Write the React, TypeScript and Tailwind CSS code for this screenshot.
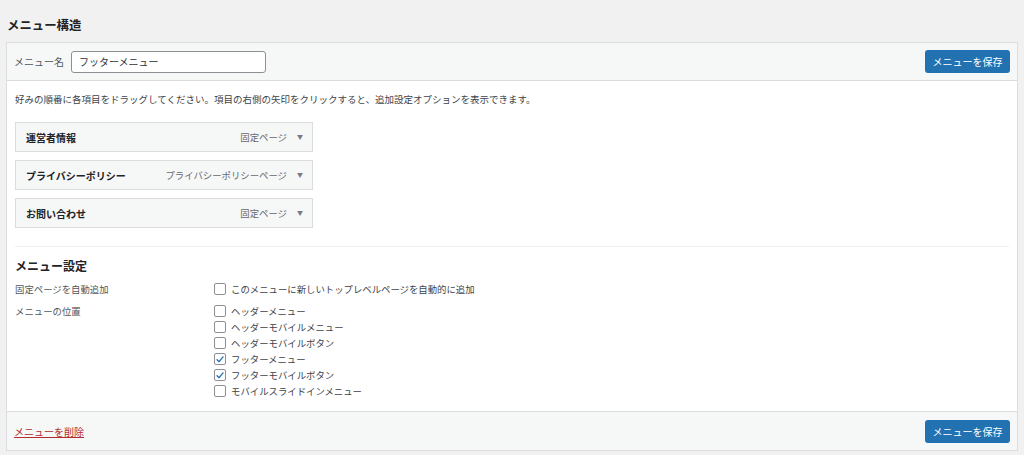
import React from 'react';

const items = [
  { title: '運営者情報', type: '固定ページ' },
  { title: 'プライバシーポリシー', type: 'プライバシーポリシーページ' },
  { title: 'お問い合わせ', type: '固定ページ' },
];

const locations = [
  { label: 'ヘッダーメニュー', checked: false },
  { label: 'ヘッダーモバイルメニュー', checked: false },
  { label: 'ヘッダーモバイルボタン', checked: false },
  { label: 'フッターメニュー', checked: true },
  { label: 'フッターモバイルボタン', checked: true },
  { label: 'モバイルスライドインメニュー', checked: false },
];

const Checkbox: React.FC<{ checked?: boolean }> = ({ checked }) => (
  <span className="w-[12px] h-[12px] border border-[#8c8f94] rounded-[2px] bg-white flex items-center justify-center flex-shrink-0">
    {checked && (
      <svg viewBox="0 0 12 12" className="w-[11px] h-[11px]">
        <path d="M2.5 6.2 L5 8.6 L9.6 2.8" fill="none" stroke="#2271b1" strokeWidth="1.6" strokeLinecap="round" strokeLinejoin="round" />
      </svg>
    )}
  </span>
);

const SaveButton: React.FC = () => (
  <button className="h-[23px] w-[85px] bg-[#2271b1] text-white text-[10px] rounded-[3px] flex items-center justify-center">
    メニューを保存
  </button>
);

export default function App() {
  return (
    <div
      className="w-[1024px] h-[455px] bg-[#f1f1f1] text-[#1d2327] overflow-hidden"
      style={{ fontFamily: '"Noto Sans CJK JP", "Noto Sans", sans-serif' }}
    >
      <h2 className="pl-[7px] pt-[16px] h-[42px] text-[12.4px] font-bold leading-[18px]">メニュー構造</h2>

      <div className="ml-[6px] w-[1012px] border border-[#dcdcde] bg-white">
        {/* Header */}
        <div className="h-[38px] bg-[#f6f7f7] border-b border-[#dcdcde] flex items-center justify-between pl-[7px] pr-[7px]">
          <div className="flex items-center gap-[7px]">
            <span className="text-[10px] text-[#50575e]">メニュー名</span>
            <div className="w-[195px] h-[22px] border border-[#8c8f94] rounded-[3px] bg-white flex items-center px-[7px] text-[10px] text-[#2c3338]">
              フッターメニュー
            </div>
          </div>
          <SaveButton />
        </div>

        {/* Body */}
        <div className="px-[8px] pt-[11px] pb-[13px]">
          <p className="text-[9.5px] text-[#3c434a] leading-[14px]">
            好みの順番に各項目をドラッグしてください。項目の右側の矢印をクリックすると、追加設定オプションを表示できます。
          </p>

          <div className="mt-[16px] flex flex-col gap-[8px]">
            {items.map(item => (
              <div
                key={item.title}
                className="w-[298px] h-[30px] border border-[#dcdcde] bg-[#f6f7f7] flex items-center justify-between pl-[10px] pr-[9px]"
              >
                <span className="text-[10px] font-bold text-[#1d2327]">{item.title}</span>
                <span className="flex items-center gap-[10px]">
                  <span className="text-[9.4px] text-[#646970]">{item.type}</span>
                  <span className="text-[6px] text-[#787c82]">▼</span>
                </span>
              </div>
            ))}
          </div>

          <div className="mt-[18px] border-t border-[#f0f0f1]" />

          <h3 className="mt-[11px] text-[12px] font-bold leading-[16px]">メニュー設定</h3>

          <div className="mt-[8px] flex">
            <div className="w-[199px] text-[9.4px] text-[#50575e] leading-[14px]">固定ページを自動追加</div>
            <label className="flex items-center gap-[5px] text-[9.4px] text-[#3c434a] leading-[14px]">
              <Checkbox />
              このメニューに新しいトップレベルページを自動的に追加
            </label>
          </div>

          <div className="mt-[8px] flex">
            <div className="w-[199px] text-[9.4px] text-[#50575e] leading-[14px]">メニューの位置</div>
            <div className="flex flex-col gap-[2px]">
              {locations.map(loc => (
                <label key={loc.label} className="flex items-center gap-[5px] text-[9.4px] text-[#3c434a] leading-[14px]">
                  <Checkbox checked={loc.checked} />
                  {loc.label}
                </label>
              ))}
            </div>
          </div>
        </div>

        {/* Footer */}
        <div className="h-[39px] bg-[#f6f7f7] border-t border-[#dcdcde] flex items-center justify-between pl-[7px] pr-[7px]">
          <a className="text-[10px] text-[#b32d2e] underline">メニューを削除</a>
          <SaveButton />
        </div>
      </div>
    </div>
  );
}
